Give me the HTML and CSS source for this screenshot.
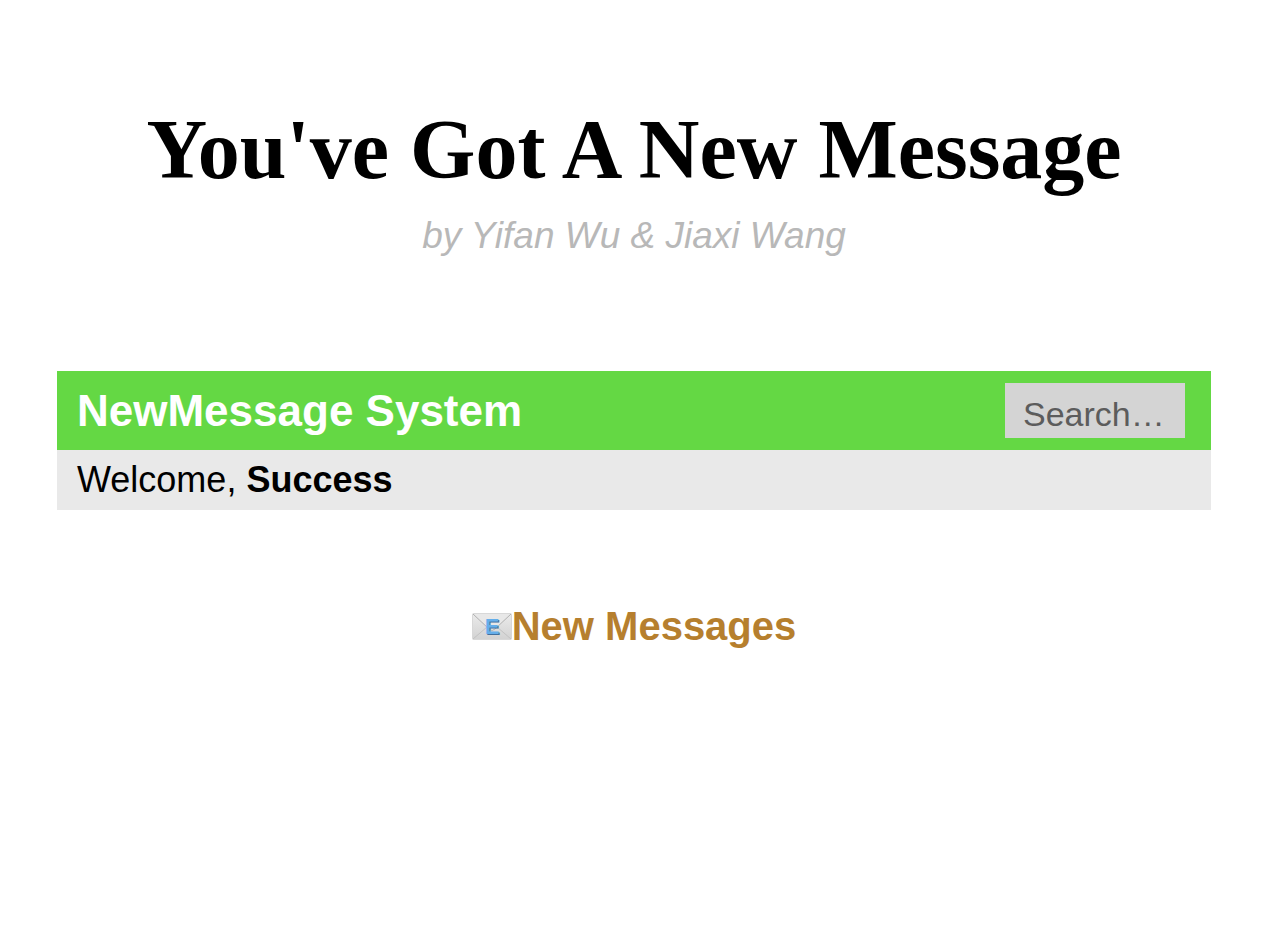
FILE: index.html
```html
<!DOCTYPE html>
<html lang="en">
<head>
  <meta charset="UTF-8">
  <meta name="viewport" content="width=device-width, initial-scale=1.0">
  <title>You've Got A New Message</title>
  <link rel="stylesheet" href="styles.css">
</head>
<body>

  <header class="intro">
    <h1>You've Got A New Message</h1>
    <p class="authors">by Yifan Wu &amp; Jiaxi Wang</p>
  </header>

  <main>
    <div class="navbar">
      <h2>NewMessage System</h2>
      <input type="text" class="search" placeholder="Search…" aria-label="Search">
    </div>
    <p class="welcome">Welcome, <strong>Success</strong></p>

    <div class="messages">
      <a href="#messages">
        <svg class="mail" viewBox="0 0 40 27" aria-hidden="true">
          <defs>
            <linearGradient id="paper" x1="0" y1="0" x2="0" y2="1">
              <stop offset="0" stop-color="#ebebeb"/>
              <stop offset="1" stop-color="#d2d2d2"/>
            </linearGradient>
          </defs>
          <rect x="0.5" y="0.5" width="39" height="26" rx="1" fill="url(#paper)" stroke="#d8d8d8"/>
          <path d="M1 26L15 14M39 26L25 14" fill="none" stroke="#c2c2c2"/>
          <path d="M1 1L17 16Q20 19 23 16L39 1Z" fill="#e8e8e8"/>
          <path d="M1 1L17 16Q20 19 23 16L39 1" fill="none" stroke="#b0b0b0"/>
          <text x="21" y="22" text-anchor="middle" class="mail-shadow">E</text>
          <text x="20" y="21" text-anchor="middle" class="mail-letter">E</text>
        </svg>New Messages</a>
    </div>
  </main>

</body>
</html>
```

FILE: styles.css
```css
body {
  margin: 0;
  padding: 102px 55px 0 57px;
  background-color: white;
  color: black;
  font-family: "Liberation Sans", Helvetica, Arial, sans-serif;
}

h1, h2, p {
  margin: 0;
}

.intro {
  text-align: center;
}

h1 {
  font-family: "Liberation Serif", serif;
  font-size: 84px;
  line-height: 96px;
}

.authors {
  margin-top: 14px;
  font-size: 37px;
  line-height: 48px;
  font-style: italic;
  color: #b8b8b8;
}

main {
  margin-top: 111px;
}

.navbar {
  display: flex;
  justify-content: space-between;
  align-items: center;
  padding: 12px 26px 12px 20px;
  background-color: #64d844;
}

h2 {
  color: white;
  font-size: 44px;
  line-height: 55px;
}

.search {
  box-sizing: border-box;
  width: 180px;
  height: 55px;
  padding: 8px 12px 0 18px;
  border: 0;
  border-radius: 0;
  background-color: #d4d4d4;
  font-family: inherit;
  font-size: 34px;
}

.search::placeholder {
  color: #5c5c5c;
}

.welcome {
  padding: 6px 20px;
  background-color: #e9e9e9;
  font-size: 36px;
  line-height: 48px;
}

.messages {
  margin-top: 92px;
  text-align: center;
}

.messages a {
  display: inline-flex;
  align-items: center;
  color: #b67f2e;
  font-size: 40px;
  font-weight: bold;
  line-height: 48px;
  text-decoration: none;
}

.mail {
  width: 40px;
  height: 27px;
}

.mail-letter, .mail-shadow {
  font-size: 22px;
  font-weight: bold;
}

.mail-letter {
  fill: #64aeea;
}

.mail-shadow {
  fill: #426f9c;
}
```
